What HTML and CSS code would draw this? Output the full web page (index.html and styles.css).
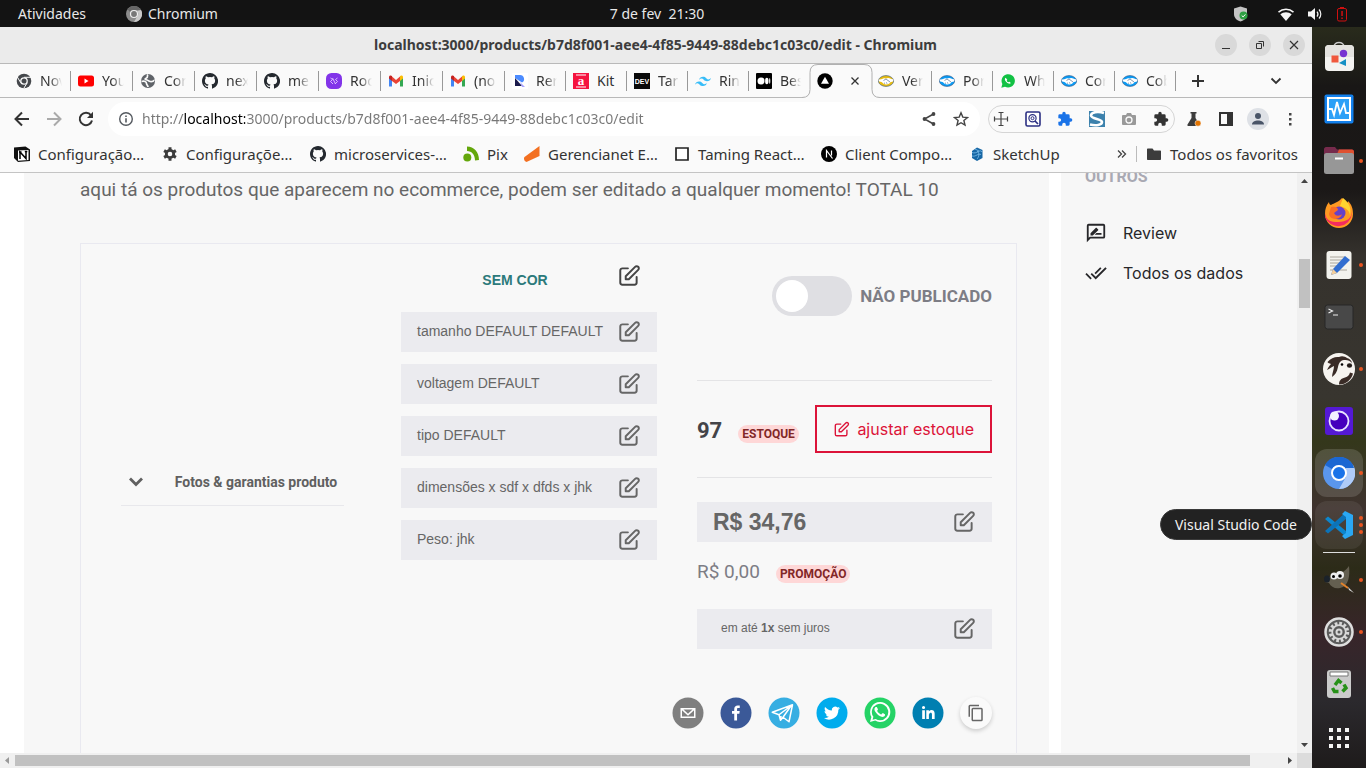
FILE: index.html
```html
<!DOCTYPE html>
<html lang="pt-BR">
<head>
<meta charset="utf-8">
<title>Editar produto</title>
<link rel="stylesheet" href="styles.css">
</head>
<body>
<svg class="defs" aria-hidden="true">
  <symbol id="edit" viewBox="1 1 22 22"><path d="M11 5H6a2 2 0 0 0-2 2v11a2 2 0 0 0 2 2h11a2 2 0 0 0 2-2v-5m-1.414-9.414a2 2 0 1 1 2.828 2.828L11.828 15H9v-2.828l8.586-8.586z" fill="none" stroke="currentColor" stroke-width="1.8" stroke-linecap="round" stroke-linejoin="round"/></symbol>
  <symbol id="github" viewBox="0 0 16 16"><path fill="#24292f" d="M8 0C3.58 0 0 3.58 0 8c0 3.54 2.29 6.53 5.47 7.59.4.07.55-.17.55-.38v-1.34c-2.23.49-2.7-1.07-2.7-1.07-.36-.93-.89-1.17-.89-1.17-.73-.5.06-.49.06-.49.8.06 1.23.83 1.23.83.71 1.22 1.87.87 2.33.66.07-.52.28-.87.51-1.07-1.78-.2-3.65-.89-3.65-3.95 0-.87.31-1.59.82-2.15-.08-.2-.36-1.02.08-2.12 0 0 .67-.21 2.2.82a7.7 7.7 0 0 1 4 0c1.53-1.04 2.2-.82 2.2-.82.44 1.1.16 1.92.08 2.12.51.56.82 1.27.82 2.15 0 3.07-1.87 3.75-3.65 3.95.29.25.54.73.54 1.48v2.19c0 .21.15.46.55.38A8 8 0 0 0 8 0z"/></symbol>
  <symbol id="gmail" viewBox="0 0 16 16"><path fill="#4285f4" d="M1 4v9.5h3V7z"/><path fill="#34a853" d="M15 4v9.5h-3V7z"/><path fill="#ea4335" d="M4 3.5 8 7l4-3.5V8l-4 3-4-3z"/><path fill="#c5221f" d="M1 4c0-1.6 1.8-2 3-1v5L1 5.600z"/><path fill="#fbbc04" d="M15 4c0-1.600-1.800-2-3-1v5l3-2.400z"/></symbol>
  <symbol id="hands" viewBox="0 0 16 12"><ellipse cx="8" cy="6" rx="7.600" ry="5.400" fill="currentColor" stroke="#31517c" stroke-width=".6"/><path d="M.8 4.200C3 5.200 4.500 3 6.500 3.200L8 3.600l2-.5c2-.2 3 1.700 5.200 1.100.3 1.300 0 2-.7 2.600L12.500 7c-.5 1.700-2.500 2.600-4.300 2.500C6 9.500 5 8 3.500 7L1.300 6.600C.7 6 .6 5 .8 4.200z" fill="#fff"/><path d="M5.500 5.500 8 4l4 3M6 7.800l1 .8M8 7.500l1.300 1" fill="none" stroke="#31517c" stroke-width=".6"/></symbol>
  <symbol id="puzzle" viewBox="0 0 24 24"><path fill="currentColor" d="M20.500 11H19V7a2 2 0 0 0-2-2h-4V3.500a2.500 2.500 0 0 0-5 0V5H4a2 2 0 0 0-2 2v3.800h1.500a2.700 2.700 0 0 1 0 5.400H2V20a2 2 0 0 0 2 2h3.800v-1.500a2.700 2.700 0 0 1 5.400 0V22H17a2 2 0 0 0 2-2v-4h1.500a2.500 2.500 0 0 0 0-5z"/></symbol>
  <symbol id="whats" viewBox="0 0 24 24"><path fill="currentColor" d="M12 2a10 10 0 0 0-8.600 15L2 22l5.200-1.400A10 10 0 1 0 12 2zm0 18.200a8.200 8.200 0 0 1-4.300-1.200l-3.100.8.8-3A8.200 8.200 0 1 1 12 20.200z"/><path fill="currentColor" d="M16.600 14c-.2-.1-1.500-.8-1.700-.8-.3-.1-.4-.1-.6.1l-.8 1c-.1.200-.3.200-.5.100-1.700-.8-2.800-1.700-3.800-3.400-.1-.3 0-.4.100-.5l.6-.8v-.4L9.100 7.400c-.2-.5-.4-.4-.6-.4H8c-.2 0-.5.100-.7.300-1.600 1.600-.7 3.600.2 4.800 1.500 2.300 3.500 3.900 5.900 4.700 1.700.5 3-.3 3.400-1 .2-.5.300-1.300.2-1.400z"/></symbol>
  <symbol id="chrome" viewBox="0 0 16 16"><circle cx="8" cy="8" r="7.300" fill="#45484c"/><path d="M8 4.300h7M4.800 9.800 1.300 4M11.200 9.800 7.700 15.500" stroke="#fafafa"/><circle cx="8" cy="8" r="3.200" fill="#45484c" stroke="#fafafa" stroke-width="1.300"/></symbol>
</svg>

<header class="topbar">
  <div class="topbar-left">
    <button type="button">Atividades</button>
    <button type="button" class="app-menu">
      <svg width="16" height="16" viewBox="0 0 16 16"><circle cx="8" cy="8" r="8" fill="#8c8c8c"/><path d="M8 0a8 8 0 0 1 7 4H8a4 4 0 0 0-4 2L1.500 3.300A8 8 0 0 1 8 0z" fill="#666"/><path d="M15 4a8 8 0 0 1-7 12l3.500-6A4 4 0 0 0 11 5z" fill="#c8c8c8"/><circle cx="8" cy="8" r="3.500" fill="#777" stroke="#eee" stroke-width="1.200"/></svg>
      Chromium</button>
  </div>
  <time>7 de fev&nbsp; 21:30</time>
  <div class="topbar-right">
    <svg class="shield" width="16" height="16" viewBox="0 0 16 16"><path d="M1 2.500 7.500.5 14 2.500V8c0 4-3 6.500-6.500 7.500C4 14.500 1 12 1 8z" fill="#c4c4c4"/><circle cx="10.500" cy="9.500" r="4" fill="#2ea043"/><path d="m8.700 9.500 1.400 1.400 2.300-2.500" stroke="#fff" fill="none"/></svg>
    <svg width="16" height="16" viewBox="0 0 16 16"><path d="M0 5.500a12 12 0 0 1 16 0l-1 1.200a10.500 10.500 0 0 0-14 0z" fill="#f5f5f5"/><path d="M2.300 8.200a9 9 0 0 1 11.400 0L8 15z" fill="#f5f5f5"/></svg>
    <svg width="16" height="16" viewBox="0 0 16 16"><path d="M1 5.500h3L8 2v12l-4-3.500H1z" fill="#f5f5f5"/><path d="M10 5.500a4 4 0 0 1 0 5M12 3.500a6.500 6.500 0 0 1 0 9" fill="none" stroke="#f5f5f5" stroke-width="1.200"/></svg>
    <svg width="12" height="16" viewBox="0 0 12 16"><rect x="1.500" y="2.500" width="9" height="12.500" rx="1.500" fill="none" stroke="#d01010"/><path d="M4 1h4v1H4zM5.300 5h1.500v5H5.300zM5.300 11.500h1.500V13H5.300z" fill="#d01010"/></svg>
  </div>
</header>

<div class="desktop">
<div class="window">
  <div class="titlebar">
    <h1>localhost:3000/products/b7d8f001-aee4-4f85-9449-88debc1c03c0/edit - Chromium</h1>
    <div class="window-buttons">
      <button type="button" aria-label="Minimizar"><svg width="10" height="10"><path d="M1 8.500h8" stroke="#333" stroke-width="1"/></svg></button>
      <button type="button" aria-label="Restaurar"><svg width="10" height="10"><path d="M1.500 3.500h5v5h-5zM3.500 1.500h5v5" fill="none" stroke="#333"/></svg></button>
      <button type="button" aria-label="Fechar"><svg width="10" height="10"><path d="m1 1 8 8M9 1 1 9" stroke="#333" stroke-width="1.200"/></svg></button>
    </div>
  </div>

  <nav class="tabs" aria-label="Abas">
    <button type="button" class="tab"><svg><use href="#chrome"/></svg><span>Nov</span></button>
    <button type="button" class="tab"><svg viewBox="0 0 16 16"><rect y="2.500" width="16" height="11" rx="2.500" fill="#f00"/><path d="M6.500 5.500v5l4-2.500z" fill="#fff"/></svg><span>You</span></button>
    <button type="button" class="tab"><svg viewBox="0 0 16 16"><circle cx="8" cy="8" r="7" fill="#5f6368"/><path d="M1.500 8.500c3-1 5 .3 5 2s1.500 1.500 1.500 3.500M8 1.500c-1.500 1.500.5 2.500-1.500 3.500S4.500 6 7 7s3 2 5 1.500 2-1.500 2.500-1" fill="none" stroke="#fafafa" stroke-width="1.700"/></svg><span>Cor</span></button>
    <button type="button" class="tab"><svg><use href="#github"/></svg><span>nex</span></button>
    <button type="button" class="tab"><svg><use href="#github"/></svg><span>me</span></button>
    <button type="button" class="tab"><svg viewBox="0 0 16 16"><rect width="16" height="16" rx="5.500" fill="#8234e9"/><path d="m4.500 5 2 1.500-2 2L7 11M11.500 5l-2 1.500 2 2L9 11M6.500 5l3 6" fill="none" stroke="#e3ccff" stroke-width=".9"/></svg><span>Roc</span></button>
    <button type="button" class="tab"><svg><use href="#gmail"/></svg><span>Inic</span></button>
    <button type="button" class="tab"><svg><use href="#gmail"/></svg><span>(no</span></button>
    <button type="button" class="tab"><svg viewBox="0 0 16 16"><path d="M0 0h16v16H0z" fill="#fff"/><path d="M3 2h5a4 4 0 0 1 2 7.500L3 5z" fill="#4b8bff"/><path d="M3 5v8h7z" fill="#1a1a4b"/><path d="m8 9 5 5h-3z" fill="#a9a4ff"/></svg><span>Rer</span></button>
    <button type="button" class="tab"><svg viewBox="0 0 16 16"><path d="M0 0h16v16H0z" fill="#f5133f"/><path d="M3 2h10M3 14h10" stroke="#fff" stroke-width="1.200"/><text x="8" y="12" text-anchor="middle" class="glyph-a">a</text></svg><span class="whole">Kit</span></button>
    <button type="button" class="tab"><svg viewBox="0 0 16 16"><path d="M0 0h16v16H0z" fill="#0a0a0a"/><text x="8" y="11" text-anchor="middle" class="glyph-dev">DEV</text></svg><span>Tar</span></button>
    <button type="button" class="tab"><svg viewBox="0 0 16 16"><path d="M4 7c.6-2.200 2-3.300 4-3.300 3 0 3.400 2.300 5 2.700 1 .2 2-.2 3-1.400-.6 2.200-2 3.300-4 3.300-3 0-3.400-2.300-5-2.700-1-.2-2 .2-3 1.400zM0 11.800c.6-2.200 2-3.300 4-3.300 3 0 3.400 2.300 5 2.700 1 .2 2-.2 3-1.400-.6 2.200-2 3.300-4 3.300-3 0-3.400-2.300-5-2.700-1-.2-2 .2-3 1.400z" fill="#38bdf8"/></svg><span>Rin</span></button>
    <button type="button" class="tab"><svg viewBox="0 0 16 16"><rect width="16" height="16" rx="1" fill="#000"/><circle cx="5" cy="8" r="3.500" fill="#fff"/><ellipse cx="10.800" cy="8" rx="1.700" ry="3.300" fill="#fff"/><ellipse cx="13.700" cy="8" rx=".6" ry="3" fill="#fff"/></svg><span>Bes</span></button>
    <div class="tab active">
      <svg class="tab-shape" width="78" height="35" viewBox="0 0 78 35" aria-hidden="true"><path d="M0 33.500q8 0 8-8V8.500q0-8 8-8h46q8 0 8 8v17q0 8 8 8V35H0z" fill="#fafafa"/><path d="M0 33.500q8 0 8-8V8.500q0-8 8-8h46q8 0 8 8v17q0 8 8 8" fill="none" stroke="#b0b0b0"/></svg>
      <svg viewBox="0 0 16 16"><circle cx="8" cy="8" r="7.700" fill="#000"/><path d="m8 3.800 4 7H4z" fill="#fff"/></svg>
      <button type="button" aria-label="Fechar aba"><svg class="close" viewBox="0 0 8 8"><path d="m.5.5 7 7M7.500.5l-7 7" stroke="#333" stroke-width="1.300"/></svg></button>
    </div>
    <button type="button" class="tab gold"><svg><use href="#hands"/></svg><span>Ver</span></button>
    <button type="button" class="tab blue"><svg><use href="#hands"/></svg><span>Por</span></button>
    <button type="button" class="tab"><svg viewBox="0 0 24 24"><path d="M2 22 3.500 16.500a10 10 0 1 1 4 4z" fill="#12c144"/><path d="M8.500 7c-2 1-1.500 4 1 6.500s5.500 3.500 6.800 1.500l-2.300-2-1.500 1c-1.200-.5-2-1.500-2.500-2.500l.9-1.500z" fill="#fff"/></svg><span>Wh</span></button>
    <button type="button" class="tab blue"><svg><use href="#hands"/></svg><span>Cor</span></button>
    <button type="button" class="tab blue"><svg><use href="#hands"/></svg><span>Cob</span></button>
    <button type="button" class="strip-button" aria-label="Nova aba"><svg width="12" height="12"><path d="M6 0v12M0 6h12" stroke="#333" stroke-width="2"/></svg></button>
    <button type="button" class="strip-button search" aria-label="Pesquisar abas"><svg width="12" height="12"><path d="m1.500 3.500 4.500 4.500 4.500-4.500" fill="none" stroke="#333" stroke-width="1.800"/></svg></button>
  </nav>

  <div class="toolbar">
    <button type="button" aria-label="Voltar"><svg width="16" height="16"><path d="M15 8H2M8 1.500 1.500 8 8 14.500" fill="none" stroke="#333" stroke-width="2"/></svg></button>
    <button type="button" aria-label="Avançar"><svg width="16" height="16"><path d="M1 8h13M8 1.500 14.500 8 8 14.500" fill="none" stroke="#aaa" stroke-width="2"/></svg></button>
    <button type="button" aria-label="Recarregar"><svg width="16" height="16"><path d="M13 4.300A6.200 6.200 0 1 0 14 9.500" fill="none" stroke="#333" stroke-width="2"/><path d="M15 .8V7H9z" fill="#333"/></svg></button>
    <div class="omnibox">
      <svg width="16" height="16"><circle cx="8" cy="8" r="6.300" fill="none" stroke="#555a60" stroke-width="1.400"/><path d="M8 7.300V11.500M8 4.500v1.600" stroke="#555a60" stroke-width="1.600"/></svg>
      <input type="text" class="url" aria-label="Endereço" value="http://localhost:3000/products/b7d8f001-aee4-4f85-9449-88debc1c03c0/edit">
      <button type="button" aria-label="Compartilhar"><svg width="16" height="16"><path d="M12.500 3 3.500 8l9 5" fill="none" stroke="#444" stroke-width="1.500"/><circle cx="12.500" cy="3" r="1.900" fill="#444"/><circle cx="3.500" cy="8" r="1.900" fill="#444"/><circle cx="12.500" cy="13" r="1.900" fill="#444"/></svg></button>
      <button type="button" aria-label="Favoritar"><svg width="16" height="16"><path d="m8 1.800 1.800 4.300 4.700.4-3.600 3 1.100 4.600L8 11.700l-4 2.400 1.100-4.600-3.600-3 4.700-.4z" fill="none" stroke="#444" stroke-width="1.400"/></svg></button>
    </div>
    <div class="extensions">
      <button type="button" aria-label="Seletor"><svg width="16" height="16"><path d="M8 1v14M1 8h14M5.500 1.500h5M5.500 14.500h5M1.500 5.500v5M14.500 5.500v5" stroke="#444" stroke-width="1.200"/></svg></button>
      <button type="button" aria-label="Busca de código"><svg width="16" height="16"><rect x="1" y="1" width="14" height="14" rx="1.500" fill="#fff" stroke="#2b2f83" stroke-width="1.600"/><circle cx="7.500" cy="7.200" r="3.600" fill="none" stroke="#2b2f83" stroke-width="1.200"/><circle cx="7.500" cy="7.200" r="1.500" fill="none" stroke="#2b2f83"/><path d="m10 10 3 3" stroke="#2b2f83" stroke-width="1.700"/></svg></button>
      <button type="button" class="accent" aria-label="Extensão"><svg width="16" height="16"><use href="#puzzle"/></svg></button>
      <button type="button" aria-label="Stylus"><svg width="16" height="16"><path d="M0 0h16v16H0z" fill="#3c81ac"/><path d="M15 2C9 0 2 1 2 4.500S13 8 13 11s-6 4-12 2.500" fill="none" stroke="#fff" stroke-width="2.600"/></svg></button>
      <button type="button" aria-label="Captura"><svg width="16" height="16"><path d="M2 4h3l1-2h4l1 2h3a1 1 0 0 1 1 1v8a1 1 0 0 1-1 1H2a1 1 0 0 1-1-1V5a1 1 0 0 1 1-1z" fill="#999"/><circle cx="8" cy="9" r="3" fill="none" stroke="#fafafa" stroke-width="1.300"/></svg></button>
      <button type="button" aria-label="Extensões"><svg width="16" height="16"><use href="#puzzle"/></svg></button>
    </div>
    <button type="button" aria-label="Experimentos"><svg width="16" height="16"><path d="M4.500 1h6v1.500h-1V7l4 6.500c.3.800 0 1.500-1 1.500H2.500c-1 0-1.300-.7-1-1.500l4-6.500V2.500h-1z" fill="#3c3c3c"/><circle cx="12" cy="12.200" r="3" fill="#e37400" stroke="#fafafa" stroke-width=".5"/></svg></button>
    <button type="button" aria-label="Painel lateral"><svg width="16" height="16"><path d="M1 1h14v14H1z" fill="#333"/><path d="M3 3h6v10H3z" fill="#fafafa"/></svg></button>
    <button type="button" aria-label="Perfil"><svg width="22" height="22"><circle cx="11" cy="11" r="11" fill="#dee1e6"/><circle cx="11" cy="8" r="3" fill="#4a5568"/><path d="M5 16.500c0-5.300 12-5.300 12 0z" fill="#4a5568"/></svg></button>
    <button type="button" aria-label="Menu"><svg width="16" height="16"><path d="M7 2h2.500v2.500H7zM7 7h2.500v2.500H7zM7 12h2.500v2.500H7z" fill="#444"/></svg></button>
  </div>

  <nav class="bookmarks" aria-label="Favoritos">
    <div class="bookmark-list">
      <a href="#"><svg viewBox="0 0 16 16"><path d="M0 1.500 11.500.5 16 3.500V15l-12 1-4-4z" fill="#111"/><path d="M4 4.500 14.500 4v10L4 14.700z" fill="#fff"/><path d="M6 13V6l6 6.500V5.500M5 6h2.500M10.800 5.500h2.500" fill="none" stroke="#000" stroke-width="1.500"/></svg>Configuração…</a>
      <a href="#"><svg viewBox="0 0 16 16"><circle cx="8" cy="8" r="3.700" fill="none" stroke="#3c3c3c" stroke-width="2.800"/><path d="M8 1.200v2.500M8 12.300v2.500M2.100 4.600l2.200 1.300M11.700 10.100l2.200 1.300M2.100 11.400l2.200-1.300M11.700 5.900l2.200-1.300" stroke="#3c3c3c" stroke-width="3"/></svg>Configuraçõe…</a>
      <a href="#"><svg><use href="#github"/></svg>microservices-…</a>
      <a href="#"><svg viewBox="0 0 16 16"><circle cx="4.300" cy="11.500" r="4" fill="#64a70b"/><path d="M4 .5C11 .5 16 6 16 14l-4 .5C12 9 9 5 4 5z" fill="#64a70b"/></svg>Pix</a>
      <a href="#"><svg viewBox="0 0 16 16"><path d="M.5 11 15.500 0v10L3 15.800C1 16.500-1 13 .5 11z" fill="#f37021"/></svg>Gerencianet E…</a>
      <a href="#"><svg viewBox="0 0 16 16"><path d="M2 2h12v12H2z" fill="#fff" stroke="#222" stroke-width="1.700"/></svg>Taming React…</a>
      <a href="#"><svg viewBox="0 0 16 16"><circle cx="8" cy="8" r="8" fill="#000"/><path d="M5.500 11.500v-7l6 8M10.500 4.500v5" fill="none" stroke="#fff" stroke-width="1.200"/></svg>Client Compo…</a>
      <a href="#"><svg viewBox="0 0 16 16"><path d="m8 1.500 5.500 2.500v8L8 15l-5-3V5z" fill="#1767a5"/><path d="M3 6.500c5 2 8-4 10-.5M3 10c4 1 6-3 9-1.500M8 5c3 2 2 6 0 8M6 3l4 2" fill="none" stroke="#7fc0ec" stroke-width=".8"/></svg>SketchUp</a>
    </div>
    <button type="button" class="more" aria-label="Mais favoritos"><svg width="10" height="10"><path d="M1 1.500 4.500 5 1 8.500M5 1.500 8.500 5 5 8.500" fill="none" stroke="#444" stroke-width="1.300"/></svg></button>
    <a href="#" class="all"><svg viewBox="0 0 16 16"><path d="M1 3.500c0-.6.400-1 1-1h4.500L8 4.500h6c.6 0 1 .4 1 1V13c0 .6-.4 1-1 1H2c-.6 0-1-.4-1-1z" fill="#3c3c3c"/></svg>Todos os favoritos</a>
  </nav>

  <div class="viewport">
    <div class="page">
      <main class="content">
        <p class="lead">aqui tá os produtos que aparecem no ecommerce, podem ser editado a qualquer momento! TOTAL 10</p>
        <section class="card">
          <div class="columns">
            <div class="photos">
              <button type="button" class="accordion"><svg width="16" height="16"><path d="m2 4.500 6 6 6-6" fill="none" stroke="#606060" stroke-width="2.800"/></svg><span>Fotos &amp; garantias produto</span></button>
            </div>
            <div class="attributes">
              <div class="color-row"><strong>SEM COR</strong><button type="button" aria-label="Editar cor"><svg class="edit"><use href="#edit"/></svg></button></div>
              <div class="bar"><span>tamanho DEFAULT DEFAULT</span><button type="button" aria-label="Editar tamanho"><svg class="edit"><use href="#edit"/></svg></button></div>
              <div class="bar"><span>voltagem DEFAULT</span><button type="button" aria-label="Editar voltagem"><svg class="edit"><use href="#edit"/></svg></button></div>
              <div class="bar"><span>tipo DEFAULT</span><button type="button" aria-label="Editar tipo"><svg class="edit"><use href="#edit"/></svg></button></div>
              <div class="bar"><span>dimensões x sdf x dfds x jhk</span><button type="button" aria-label="Editar dimensões"><svg class="edit"><use href="#edit"/></svg></button></div>
              <div class="bar"><span>Peso: jhk</span><button type="button" aria-label="Editar peso"><svg class="edit"><use href="#edit"/></svg></button></div>
            </div>
            <div class="sales">
              <label class="publish"><input type="checkbox" role="switch">NÃO PUBLICADO</label>
              <div class="stock">
                <div class="figure"><strong>97</strong><span class="badge">ESTOQUE</span></div>
                <button type="button" class="adjust"><svg width="17" height="17"><use href="#edit"/></svg>ajustar estoque</button>
              </div>
              <div class="bar price"><strong>R$ 34,76</strong><button type="button" aria-label="Editar preço"><svg class="edit"><use href="#edit"/></svg></button></div>
              <div class="promo">R$ 0,00 <span class="badge">PROMOÇÃO</span></div>
              <div class="bar installments"><span>em até <b>1x</b> sem juros</span><button type="button" aria-label="Editar parcelas"><svg class="edit"><use href="#edit"/></svg></button></div>
            </div>
          </div>
          <div class="share">
            <button type="button" aria-label="E-mail"><svg viewBox="0 0 64 64"><circle cx="32" cy="32" r="31" fill="#7f7f7f"/><path d="M17 22v20h30V22zm24.100 3L32 33.300 22.900 25zM20 39V26.600l12 10.900 12-10.900V39z" fill="#fff"/></svg></button>
            <button type="button" aria-label="Facebook"><svg viewBox="0 0 64 64"><circle cx="32" cy="32" r="31" fill="#3b5998"/><path d="M34.100 47V33.300h4.600l.7-5.300h-5.300v-3.400c0-1.500.4-2.600 2.600-2.600h2.800v-4.800c-.5-.1-2.200-.2-4.100-.2-4.100 0-6.900 2.500-6.900 7V28H24v5.300h4.500V47z" fill="#fff"/></svg></button>
            <button type="button" aria-label="Telegram"><svg viewBox="0 0 64 64"><circle cx="32" cy="32" r="31" fill="#37aee2"/><path d="M8.500 30.500 49 15.500l-7 34-12-9-5 6-3-11zM22 35.500l25-19-17 24M25 46l1-8" fill="none" stroke="#fff" stroke-width="3" stroke-linejoin="round"/></svg></button>
            <button type="button" aria-label="Twitter"><svg viewBox="0 0 64 64"><circle cx="32" cy="32" r="31" fill="#00aced"/><path d="M48 22.100c-1.200.5-2.400.9-3.800 1 1.400-.8 2.400-2.100 2.900-3.600-1.300.8-2.700 1.300-4.200 1.600a6.600 6.600 0 0 0-11.200 6c-5.500-.3-10.300-2.900-13.500-6.900-.6 1-.9 2.100-.9 3.300 0 2.300 1.200 4.300 2.900 5.500-1.100 0-2.100-.3-3-.8v.1c0 3.200 2.300 5.800 5.300 6.400-.6.100-1.100.2-1.700.2l-1.200-.1a6.600 6.600 0 0 0 6.100 4.600A13.200 13.200 0 0 1 16 42.100 18.600 18.600 0 0 0 44.700 25.600c1.300-1 2.400-2.200 3.300-3.500z" fill="#fff"/></svg></button>
            <button type="button" aria-label="WhatsApp"><svg viewBox="0 0 64 64"><circle cx="32" cy="32" r="31" fill="#25d366"/><svg x="8" y="6" width="48" height="48" class="white"><use href="#whats"/></svg></svg></button>
            <button type="button" aria-label="LinkedIn"><svg viewBox="0 0 64 64"><circle cx="32" cy="32" r="31" fill="#007fb1"/><path d="M20.400 44h5.400V26.600h-5.400zm2.700-26.100a3.100 3.100 0 1 0 0 6.300 3.100 3.100 0 0 0 0-6.300zM34.500 34.600c0-2.100 1-3.300 2.900-3.300 1.700 0 2.500 1.200 2.500 3.300V44h5.400V33c0-4.700-2.700-6.900-6.300-6.900-3.700 0-5.200 2.900-5.200 2.900v-2.300h-5.200V44h5.200v-9.400z" fill="#fff"/></svg></button>
            <button type="button" class="copy" aria-label="Copiar"><svg viewBox="0 0 24 24"><path fill="#666" d="M16 1H4a2 2 0 0 0-2 2v14h2V3h12zm3 4H8a2 2 0 0 0-2 2v14c0 1.100.9 2 2 2h11a2 2 0 0 0 2-2V7a2 2 0 0 0-2-2zm0 16H8V7h11z"/></svg></button>
          </div>
        </section>
      </main>
      <aside class="sidebar">
        <h2>OUTROS</h2>
        <a href="#"><svg width="22" height="22" viewBox="0 0 24 24"><path fill="currentColor" d="M20 2H4a2 2 0 0 0-2 2v18l4-4h14a2 2 0 0 0 2-2V4a2 2 0 0 0-2-2zm0 14H5.200L4 17.200V4h16zM10.500 14H18v-2h-5.500zM14.400 8.900c.2-.2.200-.5 0-.7l-1.800-1.800a.5.500 0 0 0-.7 0L6 12.200V14.600h2.500z"/></svg>Review</a>
        <a href="#"><svg width="22" height="22" viewBox="0 0 24 24"><path fill="currentColor" d="m18 7-1.400-1.400-6.300 6.300 1.400 1.400zm4.200-1.400L11.700 16.200l-4.200-4.200-1.400 1.400L11.700 19l12-12zM.4 13.400 6 19l1.400-1.400L1.800 12z"/></svg>Todos os dados</a>
      </aside>
    </div>
    <div class="scroll-y" aria-hidden="true"><svg width="7" height="4"><path d="M0 4 3.500 0 7 4z" fill="#444"/></svg><i></i><svg class="end" width="7" height="4"><path d="M0 0 3.500 4 7 0z" fill="#444"/></svg></div>
    <div class="scroll-x" aria-hidden="true"><svg width="4" height="7"><path d="M4 0 0 3.500 4 7z" fill="#999"/></svg><i></i><svg width="4" height="7"><path d="M0 0 4 3.500 0 7z" fill="#444"/></svg></div>
    <div class="corner"></div>
  </div>
</div>

<nav class="dock" aria-label="Aplicativos">
  <button type="button" aria-label="Software"><svg viewBox="0 0 32 32"><path d="M11 6c0-6 10-6 10 0" fill="none" stroke="#ccc" stroke-width="1.500"/><rect x="2" y="4" width="29" height="26" rx="4" fill="#f4f3f0"/><path d="M2 16V8a4 4 0 0 1 4-4h21a4 4 0 0 1 4 4v8z" fill="#e4e3df"/><path d="M8.500 14.500h7v7h-7z" fill="#f0583c"/><circle cx="20.500" cy="12.500" r="3.700" fill="#7733d1"/><path d="M16 22l7-4v7z" fill="#1690c4"/></svg></button>
  <button type="button" aria-label="Monitor do sistema"><svg viewBox="0 0 32 32"><rect x="1.500" y="1.500" width="29" height="29" rx="2" fill="#1380ec"/><path d="M5 5h22v22H5z" fill="#2ca0f7" stroke="#fff" stroke-width="2"/><path d="M5 16h4l2 6 3-13 3 11 4-9 2 9h5" fill="none" stroke="#fff" stroke-width="1.800"/></svg></button>
  <button type="button" aria-label="Arquivos" class="running"><svg viewBox="0 0 32 32"><path d="M1 4c0-1 1-2 2-2h9l2 2.500h15c1 0 2 1 2 2V18H1z" fill="#762b4c"/><path d="M16 4.500h13c1 0 2 1 2 2V14H12z" fill="#df5130"/><rect x="1" y="8" width="30" height="21" rx="2.500" fill="#979797"/><path d="M12 12.500h8v2h-8z" fill="#fff"/></svg></button>
  <button type="button" aria-label="Firefox"><svg viewBox="0 0 32 32"><path d="M19 1c3 2 3 4 4 5s2-1 2-2c4 4 5 8 5 13a14 14 0 0 1-28 0c0-5 1-8 4-12 0 2 1 3 2 3 3-2 8-3 11-7z" fill="#ff9a22"/><path d="M2 16c1 8 6 9 13 9 9 0 14-4 14-11v3a14 14 0 0 1-27 3z" fill="#f42b60"/><path d="M20 1c8 6 8 12 7 18 0-6-6-9-10-10z" fill="#ffd52f"/><circle cx="16" cy="16" r="6.500" fill="#6741c9"/><path d="M8 10c4-1 7 0 7 3l-4 3c2 4 6 3 8 1-1 6-12 7-13 0z" fill="#fb6d24"/></svg></button>
  <button type="button" aria-label="Editor de texto" class="running"><svg viewBox="0 0 32 32"><rect x="3.500" y="2" width="25" height="28" rx="3" fill="#f3f3ee"/><path d="M7 8h15M7 11h12M7 14h10M7 17h8M7 21h17" stroke="#aaa69c"/><path d="M22 7l5 4-13 13-6 2 2-6z" fill="#316ed0"/><path d="m10 20-2 6 6-2z" fill="#f5cf9a"/></svg></button>
  <button type="button" aria-label="Terminal"><svg viewBox="0 0 32 32"><rect x="2" y="4" width="28" height="24" rx="2.500" fill="#484848" stroke="#272727"/><path d="m5.500 8 4 2-4 2M10 14h5" fill="none" stroke="#eee" stroke-width="1.200"/></svg></button>
  <button type="button" aria-label="DBeaver" class="running"><svg viewBox="0 0 32 32"><circle cx="16" cy="16" r="16" fill="#f6f4f0"/><path d="M4.500 9C8 5 12 3.500 16 4c3-1.500 6-.5 8 1 3 1 4.500 2.500 5 5-2-2.500-5-3.500-8-3-4 .5-5 3-6 7-1 5-3 8-6 10 0-4 2-7 2-11-3 1-4 3-7 4 1-2 2-4 4-6-1.500-.5-3-1-3.500-2z" fill="#392b26"/><path d="M16 31.500c0-4 2-6 6-7 3-.7 4-2 5-5l3 1c-1.500 6-6.500 11-14 11z" fill="#392b26"/><circle cx="19" cy="11.500" r="1.300"/><ellipse cx="26.500" cy="12.500" rx="2.600" ry="2.200" fill="#231c19"/></svg></button>
  <button type="button" aria-label="Insomnia"><svg viewBox="0 0 32 32"><rect x="2" y="2" width="28" height="28" rx="3" fill="#5419d4"/><circle cx="16" cy="16" r="9.500" fill="#4500bd" stroke="#e8e4ff" stroke-width="1.800"/><circle cx="11.500" cy="11" r="4.500" fill="#f2f0ff"/></svg></button>
  <button type="button" aria-label="Chromium" class="running tile"><svg viewBox="0 0 32 32"><circle cx="16" cy="16" r="16" fill="#5a96ec"/><path d="M2 8A16 16 0 0 1 30 8H16a8 8 0 0 0-7 4z" fill="#1b67d2"/><path d="M30 8a16 16 0 0 1-14 24l7-12V8z" fill="#afccf9"/><path d="M16 8h14l1 3H16z" fill="#1b67d2"/><circle cx="16" cy="16" r="7" fill="#1a73e8" stroke="#fff" stroke-width="2"/></svg></button>
  <button type="button" aria-label="Visual Studio Code" class="running many tile"><svg viewBox="0 0 32 32"><path d="m2 10 3-2.500 18 14.500v6z" fill="#0c86ce"/><path d="m2 22 3 2.500L23 10V3z" fill="#0c73b8"/><path d="m22 2 8 4v20l-8 4-3-3 4-3V8l-4-3z" fill="#2aa8f4"/></svg><i></i></button>
  <hr>
  <button type="button" aria-label="GIMP" class="running"><svg viewBox="0 0 32 32"><path d="M26 2c1 10 0 20-9 22-5 1-9-1-11-5l-4-1c3-3 6-8 11-8 6 0 10-4 13-8z" fill="#645f50"/><circle cx="11" cy="12" r="3.500" fill="#eee"/><circle cx="17" cy="11" r="4" fill="#eee"/><circle cx="10.500" cy="12.500" r="1.500"/><circle cx="17" cy="12" r="1.800"/><ellipse cx="4" cy="15" rx="3" ry="3.500" fill="#1b222a"/><path d="m18 19 7 5" stroke="#e2822b" stroke-width="2"/><path d="m25 23 6 6-5-3z" fill="#ddd"/></svg></button>
  <button type="button" aria-label="Configurações" class="running"><svg viewBox="0 0 32 32"><circle cx="16" cy="16" r="13.500" fill="#5b5b5b" stroke="#dedede" stroke-width="2.500"/><circle cx="16" cy="16" r="8.500" fill="none" stroke="#d8d8d8" stroke-width="3.500" stroke-dasharray="2.600 1.850"/><circle cx="16" cy="16" r="6.800" fill="none" stroke="#d8d8d8" stroke-width="1.800"/><circle cx="16" cy="16" r="3.500" fill="#d8d8d8"/><circle cx="16" cy="16" r="1.500" fill="#5b5b5b"/></svg></button>
  <button type="button" aria-label="Lixeira"><svg viewBox="0 0 32 32"><rect x="4" y="2" width="24" height="28" rx="3" fill="#cbcbcb"/><path d="M7 4h18v4H7z" fill="#fff" stroke="#777"/><g fill="none" stroke="#279118" stroke-width="3.500"><path d="m12 17 3.500-4.500 3 2.500M21 16.500l2 3.500-3.500 3.500M15.500 23.500h-4L9.500 20"/></g></svg></button>
  <button type="button" class="apps" aria-label="Mostrar aplicativos"><svg viewBox="0 0 20 20"><path fill="#f5f5f5" d="M0 0h4v4H0zm8 0h4v4H8zm8 0h4v4h-4zM0 8h4v4H0zm8 0h4v4H8zm8 0h4v4h-4zM0 16h4v4H0zm8 0h4v4H8zm8 0h4v4h-4z"/></svg></button>
  <div class="tooltip" role="tooltip">Visual Studio Code</div>
</nav>
</div>
</body>
</html>
```
FILE: styles.css
```css
:root {
  --ui: "Noto Sans", "Open Sans", sans-serif;
  --line: #b9b9b9;
  --chrome: #fafafa;
  --surface: #f7f7f7;
  --grey: #666;
}

* { box-sizing: border-box; }

body {
  margin: 0;
  height: 100vh;
  display: flex;
  flex-direction: column;
  overflow: hidden;
  background: #fff;
  font: 14px/20px var(--ui);
  color: #333;
}

button {
  display: flex;
  align-items: center;
  justify-content: center;
  padding: 0;
  border: 0;
  background: none;
  font: inherit;
  color: inherit;
}

a { color: inherit; text-decoration: none; }
svg { display: block; flex: none; }
.defs { position: absolute; width: 0; height: 0; }

/* System bar */
.topbar {
  display: grid;
  grid-template-columns: 1fr auto 1fr;
  align-items: center;
  height: 27px;
  flex: none;
  padding: 0 18px;
  background: #131313;
  color: #e8e8e8;
}
.topbar-left { display: flex; gap: 40px; }
.app-menu { gap: 6px; }
.topbar time { padding-right: 52px; }
.topbar-right { display: flex; align-items: center; justify-content: flex-end; gap: 13px; }
.shield { margin-right: 16px; }

.desktop { flex: 1; display: flex; min-height: 0; }
.window { flex: 1; min-width: 0; display: flex; flex-direction: column; background: var(--chrome); }

.titlebar {
  display: flex;
  align-items: center;
  height: 37px;
  flex: none;
  padding: 0 7px 0 96px;
  background: #ebebeb;
  border-bottom: 1px solid var(--line);
}
.titlebar h1 { flex: 1; margin: 0; text-align: center; font-size: 14px; font-weight: 700; color: #3d3d3d; white-space: nowrap; }
.window-buttons { display: flex; gap: 12px; }
.window-buttons button { width: 22px; height: 22px; border-radius: 50%; background: #d9d9d9; }

/* Tab strip */
.tabs {
  display: flex;
  align-items: center;
  height: 34px;
  flex: none;
  padding-left: 9px;
  border-bottom: 1px solid var(--line);
}
.tab {
  position: relative;
  flex: 0 1 62px;
  min-width: 0;
  height: 20px;
  padding: 0 8px 0 7px;
  justify-content: flex-start;
  gap: 8px;
  border-right: 1px solid #999;
}
.tab:nth-child(n + 9) { flex-basis: 61px; }
.tab > svg { width: 16px; height: 16px; }
.tab span {
  flex: 1;
  min-width: 0;
  overflow: hidden;
  text-align: left;
  white-space: nowrap;
  -webkit-mask-image: linear-gradient(90deg, #000 45%, transparent);
  mask-image: linear-gradient(90deg, #000 45%, transparent);
}
.tab .whole { -webkit-mask-image: none; mask-image: none; }
.tab:has(+ .active) { border-color: transparent; }
.tab.active { display: flex; align-items: center; height: 34px; padding-right: 11px; border-color: transparent; }
.tab > .tab-shape { position: absolute; left: -8px; top: 0; width: 78px; height: 35px; }
.tab.active > svg:nth-child(2) { position: relative; }
.tab.active button { position: relative; margin-left: auto; }
.close { width: 8px; height: 8px; }
.gold { color: #e8bd12; }
.blue { color: #0a9bf5; }
.tab.gold span, .tab.blue span { color: #333; }
.glyph-a { font: 700 13px "Liberation Serif", serif; fill: #fff; }
.glyph-dev { font: 700 7px "Liberation Sans", sans-serif; fill: #fff; }
.strip-button { width: 44px; }
.search { margin-left: auto; margin-right: 14px; }

/* Toolbar */
.toolbar { display: flex; align-items: center; height: 42px; flex: none; padding: 0 6px; }
.toolbar button { width: 32px; height: 32px; flex: none; }
.omnibox {
  flex: 1;
  display: flex;
  align-items: center;
  height: 34px;
  margin: 0 8px 0 6px;
  padding: 0 3px 0 10px;
  border-radius: 17px;
  background: #fff;
}
.url {
  flex: 1;
  min-width: 0;
  margin-left: 8px;
  padding: 0;
  border: 0;
  outline: 0;
  font: 14px/20px var(--ui);
  background: linear-gradient(90deg, #777 41px, #000 41px, #000 103px, #777 103px);
  -webkit-background-clip: text;
  background-clip: text;
  color: transparent;
}
.extensions {
  display: flex;
  align-items: center;
  gap: 16px;
  height: 28px;
  padding: 0 5px 0 4px;
  margin-right: 3px;
  border: 1px solid #d5d5d5;
  border-radius: 14px;
  color: #333;
}
.extensions button { width: 16px; }
.extensions .accent { color: #1a73e8; }

/* Bookmarks */
.bookmarks {
  display: flex;
  align-items: center;
  height: 33px;
  flex: none;
  padding: 0 14px 4px;
  border-bottom: 1px solid #c4c4c4;
  font-size: 15px;
}
.bookmark-list { display: grid; grid-template-columns: 148px 148px 153px 61px 150px 147px 148px 90px; }
.bookmarks a { display: flex; align-items: center; gap: 8px; white-space: nowrap; }
.bookmarks svg { width: 16px; height: 16px; }
.bookmarks .more { margin-left: auto; padding-right: 9px; }
.bookmarks .more svg { width: 10px; height: 10px; }
.bookmarks .all { padding-left: 9px; border-left: 1px solid #bbb; height: 16px; }

/* Web page */
.viewport {
  flex: 1;
  min-height: 0;
  display: grid;
  grid-template: minmax(0, 1fr) 15px / minmax(0, 1fr) 15px;
  background: #fff;
}
.page { display: flex; gap: 12px; padding-left: 24px; overflow: hidden; font-family: Roboto, sans-serif; }
.content { flex: 1; padding: 2px 32px 0 56px; background: var(--surface); }
.lead { margin: 0 0 38px; font-size: 19px; line-height: 30px; white-space: nowrap; color: var(--grey); }

.card { height: 640px; padding: 20px 24px 0 40px; border: 1px solid #e9e9f0; background: #f8f8f8; }
.columns { display: grid; grid-template-columns: 240fr 256fr 295fr; gap: 40px; }

.photos { display: flex; align-items: center; padding: 52px 17px 0 0; }
.accordion { flex: 1; height: 47px; padding-left: 7px; border-bottom: 1px solid #e8e8ec; font-weight: 700; color: #606060; }
.accordion span { flex: 1; margin-left: 24px; white-space: nowrap; }

.attributes { display: flex; flex-direction: column; gap: 12px; font-family: "Liberation Sans", Arial, sans-serif; }
.color-row { display: flex; align-items: flex-start; gap: 4px; height: 36px; padding: 0 16px; color: #444; }
.color-row strong { flex: 1; text-align: center; line-height: 32px; color: #2c7a7b; }
.edit { width: 24px; height: 24px; }

.bar {
  display: flex;
  align-items: center;
  justify-content: space-between;
  height: 40px;
  padding: 0 16px;
  background: #ebebef;
  color: var(--grey);
  font-family: "Liberation Sans", Arial, sans-serif;
  white-space: nowrap;
}
.bar span { padding-bottom: 2px; }

.sales { padding-top: 12px; }
.publish { display: flex; align-items: center; justify-content: flex-end; gap: 8px; font-size: 17px; font-weight: 700; color: #7d7d85; }
.publish input {
  appearance: none;
  width: 80px;
  height: 40px;
  margin: 0;
  padding: 4px;
  border-radius: 20px;
  background: #dfdfe3;
}
.publish input::before { content: ""; display: block; width: 32px; height: 32px; border-radius: 50%; background: #fff; }
.publish input:checked::before { margin-left: auto; }

.stock {
  display: flex;
  align-items: center;
  justify-content: space-between;
  margin: 64px 0 24px;
  padding: 24px 0;
  border: solid #e4e4e6;
  border-width: 1px 0;
}
.figure { display: flex; align-items: baseline; gap: 16px; padding-top: 3px; font-size: 22px; line-height: 28px; color: #444448; }
.badge { padding: 0 4px; border-radius: 9px; background: #fed7d7; color: #822727; font-size: 12px; line-height: 18px; font-weight: 700; }
.adjust { gap: 7px; height: 48px; padding: 0 16px; border: 2px solid #dc1439; color: #dc1439; font: 16px/24px Inter, sans-serif; white-space: nowrap; }
.price { font-size: 23px; }
.promo { display: flex; align-items: baseline; gap: 16px; margin: 16px 0 24px; font-size: 19px; line-height: 27px; color: #7d7d85; }
.installments { padding-left: 24px; font-size: 12px; }

.share { display: flex; justify-content: flex-end; gap: 16px; margin-top: 48px; }
.share button { width: 32px; height: 32px; border-radius: 50%; }
.share svg { width: 32px; height: 32px; }
.share .white { color: #fff; width: 48px; height: 48px; }
.share .copy { background: #fafafa; box-shadow: 0 2px 4px #0000002e; }
.share .copy svg { width: 18px; height: 18px; }

.sidebar { flex: 0 0 236px; padding: 0 24px; background: var(--surface); font: 16px/24px Inter, sans-serif; color: #27272a; }
.sidebar h2 { height: 40px; margin: 0; font: 700 16px/8px Roboto, sans-serif; color: #a9a9b3; }
.sidebar a { display: flex; align-items: center; height: 40px; gap: 16px; white-space: nowrap; }

/* Scroll bars */
.scroll-y, .scroll-x { display: flex; align-items: center; background: #f0f0f0; }
.scroll-y { flex-direction: column; padding: 6px 0; }
.scroll-y i { width: 11px; height: 49px; margin-top: 76px; background: #c1c1c1; }
.scroll-y .end { margin-top: auto; }
.scroll-x { padding: 0 5px; }
.scroll-x i { flex: 1; height: 11px; margin: 0 38px 0 6px; background: #c1c1c1; }
.corner { background: #dcdcdc; }

/* Dock */
.dock {
  position: relative;
  flex: 0 0 54px;
  display: flex;
  flex-direction: column;
  align-items: center;
  padding: 4px 0 14px;
  background: linear-gradient(180deg, #292b1c 0, #191716 8%, #1b1817 22%, #35322d 31%, #38352f 50%, #34371b 56%, #3f332f 65%, #2c2b18 73%, #38252a 82%, #2b292d 91%, #1e1b1b);
}
.dock button { position: relative; width: 48px; height: 48px; margin: 2px 0; border-radius: 12px; flex: none; }
.dock svg { width: 32px; height: 32px; }
.dock .tile { background: #ffffff24; }
.dock .many { background: #ffffff12; }
.dock hr { width: 32px; height: 1px; margin: 1px 0; border: 0; background: #ddd; flex: none; }
.running::after, .many::before, .many i { content: ""; position: absolute; right: 0; top: 22px; width: 4px; height: 4px; border-radius: 50%; background: #e95420; }
.many::before { top: 15px; }
.many i { top: 29px; }
.dock .apps { height: 20px; width: 20px; margin: auto 0 6px; border-radius: 0; }
.dock .apps svg { width: 20px; height: 20px; }
.tooltip {
  position: absolute;
  right: 54px;
  top: 482px;
  height: 31px;
  padding: 0 14px;
  border: 1px solid #3a3a3a;
  border-radius: 16px;
  background: #222;
  color: #f2f2f2;
  line-height: 29px;
  white-space: nowrap;
}
```
